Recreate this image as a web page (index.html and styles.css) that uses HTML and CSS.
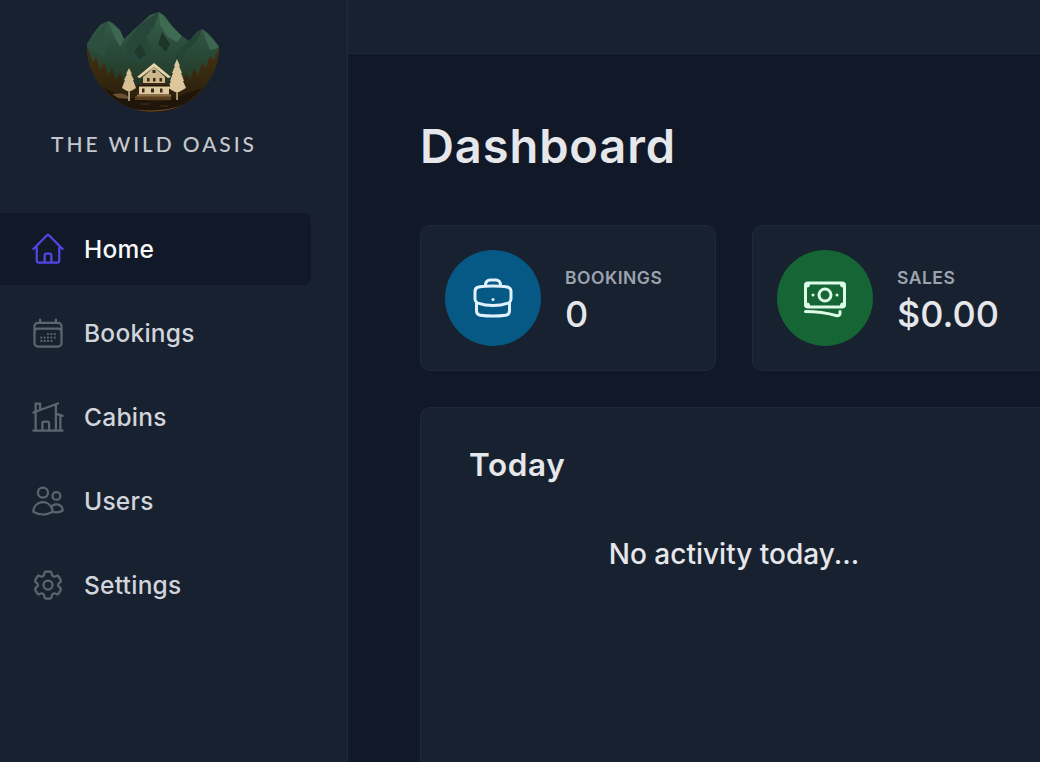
FILE: index.html
```html
<!DOCTYPE html>
<html lang="en">
<head>
  <meta charset="UTF-8">
  <title>The Wild Oasis</title>
  <link rel="stylesheet" href="styles.css">
</head>
<body>
  <div class="app">
    <aside class="sidebar">
      <div class="brand">
        <svg class="brand-logo" viewBox="87 11 132 102" aria-hidden="true">
          <defs>
            <linearGradient id="bowl" x1="0" y1="0" x2="0" y2="1">
              <stop offset="0" stop-color="#37604a"/>
              <stop offset="0.4" stop-color="#294a39"/>
              <stop offset="0.6" stop-color="#263f2c"/>
              <stop offset="1" stop-color="#2a1a0b"/>
            </linearGradient>
            <linearGradient id="forest" x1="0" y1="0" x2="0" y2="1">
              <stop offset="0" stop-color="#47310f"/>
              <stop offset="0.55" stop-color="#33260f"/>
              <stop offset="1" stop-color="#251809"/>
            </linearGradient>
            <clipPath id="shape">
              <path d="M87 44 L93 34 L100 25 L108 21 L113 23 L120 30 L124 39 L140 24 L150 15 L159 12 L165 16 L172 26 L182 36 L189 41 L197 32 L202 29 L208 33 L214 40 L219 46 A66 66 0 0 1 87 46 Z"/>
            </clipPath>
          </defs>
          <g clip-path="url(#shape)">
            <rect x="87" y="11" width="132" height="102" fill="url(#bowl)"/>
            <path d="M108 21 L103 33 L109 43 L103 56 L87 48 L87 42 Z" fill="#2c5040"/>
            <path d="M159 12 L154 27 L146 37 L150 49 L142 64 L128 60 L126 44 L140 24 Z" fill="#26473a"/>
            <path d="M159 12 L172 26 L182 36 L177 42 L168 37 L160 25 Z" fill="#3f6b52"/>
            <path d="M202 29 L196 42 L186 50 L182 64 L170 66 L178 52 L189 41 Z" fill="#244436"/>
            <path d="M202 29 L214 40 L219 48 L210 50 L206 40 Z" fill="#3d6750"/>
            <path d="M108 21 L120 30 L124 39 L120 47 L114 36 Z" fill="#3d6750"/>
            <path d="M162 32 L170 44 L166 52 L158 44 Z" fill="#1d3527"/>
            <path d="M140 44 L146 54 L140 60 L134 52 Z" fill="#1f3a2c"/>
            <path d="M87 46 L93 62 L96 56 L100 70 L104 62 L108 76 L112 68 L116 80 L120 72 L124 86 L140 86 L170 86 L182 84 L186 72 L190 80 L194 68 L198 76 L202 62 L206 68 L210 56 L214 60 L219 46 L219 113 L87 113 Z" fill="url(#forest)"/>
            <path d="M104 88 A62 62 0 0 0 202 88 L190 92 L175 98 L130 98 L115 93 Z" fill="#20150a"/>
            <path d="M112 94 Q127 92 129 99 L118 98 Z" fill="#6a5233"/>
            <path d="M135 96 H171 V100 H135 Z" fill="#5c3f20"/>
            <path d="M140 104 H150 M160 106 H168 M148 100 H165" stroke="#4a3318" stroke-width="1"/>
            <path d="M118 106 Q153 117 188 104" fill="none" stroke="#6b4a25" stroke-width="1.2"/>
          </g>
          <rect x="128.400" y="86" width="1.300" height="15" fill="#e7d3a8"/>
          <rect x="176.400" y="86" width="1.300" height="14" fill="#e7d3a8"/>
          <path d="M129 68 L132 74 L131 74 L134 80 L133 80 L136 88 L131 91 H127 L122 88 L125 80 L124 80 L127 74 L126 74 Z" fill="#d6bf92"/>
          <path d="M177 59 L180 66 L179 66 L182 73 L181 73 L184 81 L183 81 L186 88 L179 92 H175 L168 88 L171 81 L170 81 L173 73 L172 73 L175 66 L174 66 Z" fill="#dcc79b"/>
          <path d="M154 63 L137 77 L140 78 L154 67 L168 78 L171 77 Z" fill="#e5d3ab"/>
          <path d="M154 67 L143 77 V83 H165 V77 Z" fill="#cdb88e"/>
          <rect x="142" y="83" width="25" height="2.500" fill="#3a2612"/>
          <rect x="137" y="85" width="33" height="1.500" fill="#241608"/>
          <rect x="139" y="86.500" width="30" height="8" fill="#dcc9a0"/>
          <rect x="137" y="94.500" width="34" height="2" fill="#8a6d42"/>
          <path d="M152.500 70 h3 v3 h-3 Z M147 78 h2.500 v3.500 h-2.500 Z M153 78 h2.500 v3.500 h-2.500 Z M159.500 78 h2.500 v3.500 h-2.500 Z M142 88.500 h2.500 v4 h-2.500 Z M151 88.500 h3 v4 h-3 Z M160 88.500 h2.500 v4 h-2.500 Z" fill="#3a2612"/>
        </svg>
        <div class="brand-name">THE WILD OASIS</div>
      </div>
      <nav class="nav">
        <a class="nav-link active" href="#">
          <svg class="nav-icon" viewBox="0 0 24 24"><path d="m2.25 12 8.954-8.955c.44-.439 1.152-.439 1.591 0L21.75 12M4.5 9.75v10.125c0 .621.504 1.125 1.125 1.125H9.75v-4.875c0-.621.504-1.125 1.125-1.125h2.25c.621 0 1.125.504 1.125 1.125V21h4.125c.621 0 1.125-.504 1.125-1.125V9.75M8.250 21h8.250"/></svg>
          <span>Home</span>
        </a>
        <a class="nav-link" href="#">
          <svg class="nav-icon" viewBox="0 0 24 24"><path d="M6.750 3v2.250M17.250 3v2.250M3 18.750V7.500a2.250 2.250 0 0 1 2.250-2.250h13.500A2.250 2.250 0 0 1 21 7.500v11.250m-18 0A2.250 2.250 0 0 0 5.250 21h13.500A2.250 2.250 0 0 0 21 18.750m-18 0v-7.500A2.250 2.250 0 0 1 5.250 9h13.500A2.250 2.250 0 0 1 21 11.250v7.500m-9-6h.008v.008H12v-.008ZM12 15h.008v.008H12V15Zm0 2.250h.008v.008H12v-.008ZM9.750 15h.008v.008H9.750V15Zm0 2.250h.008v.008H9.750v-.008ZM7.500 15h.008v.008H7.500V15Zm0 2.250h.008v.008H7.500v-.008Zm6.750-4.500h.008v.008h-.008v-.008Zm0 2.250h.008v.008h-.008V15Zm0 2.250h.008v.008h-.008v-.008Zm2.250-4.500h.008v.008H16.500v-.008Zm0 2.250h.008v.008H16.500V15Z"/></svg>
          <span>Bookings</span>
        </a>
        <a class="nav-link" href="#">
          <svg class="nav-icon" viewBox="0 0 24 24"><path d="M8.250 21v-4.875c0-.621.504-1.125 1.125-1.125h2.250c.621 0 1.125.504 1.125 1.125V21m0 0h4.500V3.545M12.750 21h7.500V10.750M2.250 21h1.500m18 0h-18M2.250 9l4.500-1.636M18.750 3l-1.500.545m0 6.205 3 1m1.500.500-1.500-.500M6.750 7.364V3h-3v18m3-13.636 10.500-3.819"/></svg>
          <span>Cabins</span>
        </a>
        <a class="nav-link" href="#">
          <svg class="nav-icon" viewBox="0 0 24 24"><path d="M15 19.128a9.380 9.380 0 0 0 2.625.372 9.337 9.337 0 0 0 4.121-.952 4.125 4.125 0 0 0-7.533-2.493M15 19.128v-.003c0-1.113-.285-2.160-.786-3.070M15 19.128v.106A12.318 12.318 0 0 1 8.624 21c-2.331 0-4.512-.645-6.374-1.766l-.001-.109a6.375 6.375 0 0 1 11.964-3.070M12 6.375a3.375 3.375 0 1 1-6.750 0 3.375 3.375 0 0 1 6.750 0Zm8.250 2.250a2.625 2.625 0 1 1-5.250 0 2.625 2.625 0 0 1 5.250 0Z"/></svg>
          <span>Users</span>
        </a>
        <a class="nav-link" href="#">
          <svg class="nav-icon" viewBox="0 0 24 24"><path d="M9.594 3.940c.090-.542.560-.940 1.110-.940h2.593c.550 0 1.020.398 1.110.940l.213 1.281c.063.374.313.686.645.870.074.040.147.083.220.127.325.196.720.257 1.075.124l1.217-.456a1.125 1.125 0 0 1 1.370.490l1.296 2.247a1.125 1.125 0 0 1-.260 1.431l-1.003.827c-.293.241-.438.613-.430.992a7.723 7.723 0 0 1 0 .255c-.008.378.137.750.430.991l1.004.827c.424.350.534.955.260 1.430l-1.298 2.247a1.125 1.125 0 0 1-1.369.491l-1.217-.456c-.355-.133-.750-.072-1.076.124a6.470 6.470 0 0 1-.220.128c-.331.183-.581.495-.644.869l-.213 1.281c-.090.543-.560.940-1.110.940h-2.594c-.550 0-1.019-.398-1.110-.940l-.213-1.281c-.062-.374-.312-.686-.644-.870a6.520 6.520 0 0 1-.220-.127c-.325-.196-.720-.257-1.076-.124l-1.217.456a1.125 1.125 0 0 1-1.369-.490l-1.297-2.247a1.125 1.125 0 0 1 .260-1.431l1.004-.827c.292-.240.437-.613.430-.991a6.932 6.932 0 0 1 0-.255c.007-.380-.138-.751-.430-.992l-1.004-.827a1.125 1.125 0 0 1-.260-1.430l1.297-2.247a1.125 1.125 0 0 1 1.370-.491l1.216.456c.356.133.751.072 1.076-.124.072-.044.146-.086.220-.128.332-.183.582-.495.644-.869l.214-1.280Z"/><path d="M15 12a3 3 0 1 1-6 0 3 3 0 0 1 6 0Z"/></svg>
          <span>Settings</span>
        </a>
      </nav>
    </aside>

    <header class="topbar"></header>

    <main class="main">
      <h1 class="page-title">Dashboard</h1>
      <div class="stats">
        <div class="stat">
          <div class="stat-icon stat-icon-blue">
            <svg viewBox="0 0 24 24"><path d="M20.250 14.150v4.250c0 1.094-.787 2.036-1.872 2.180-2.087.277-4.216.420-6.378.420s-4.291-.143-6.378-.420c-1.085-.144-1.872-1.086-1.872-2.180v-4.250m16.500 0a2.180 2.180 0 0 0 .750-1.661V8.706c0-1.081-.768-2.015-1.837-2.175a48.114 48.114 0 0 0-3.413-.387m4.500 8.006c-.194.165-.420.295-.673.380A23.978 23.978 0 0 1 12 15.750c-2.648 0-5.195-.429-7.577-1.220a2.016 2.016 0 0 1-.673-.380m0 0A2.180 2.180 0 0 1 3 12.489V8.706c0-1.081.768-2.015 1.837-2.175a48.111 48.111 0 0 1 3.413-.387m7.500 0V5.250A2.250 2.250 0 0 0 13.500 3h-3a2.250 2.250 0 0 0-2.250 2.250v.894m7.500 0a48.667 48.667 0 0 0-7.500 0M12 12.750h.008v.008H12v-.008Z"/></svg>
          </div>
          <div class="stat-text">
            <h5 class="stat-label">Bookings</h5>
            <p class="stat-value">0</p>
          </div>
        </div>
        <div class="stat">
          <div class="stat-icon stat-icon-green">
            <svg viewBox="0 0 24 24"><path d="M2.250 18.750a60.070 60.070 0 0 1 15.797 2.101c.727.198 1.453-.342 1.453-1.096V18.750M3.750 4.500v.750A.750.750 0 0 1 3 6h-.750m0 0v-.375c0-.621.504-1.125 1.125-1.125H20.250M2.250 6v9m18-10.500v.750c0 .414.336.750.750.750h.750m-1.500-1.500h.375c.621 0 1.125.504 1.125 1.125v9.750c0 .621-.504 1.125-1.125 1.125h-.375m1.500-1.500H21a.750.750 0 0 0-.750.750v.750m0 0H3.750m0 0h-.375a1.125 1.125 0 0 1-1.125-1.125V15m1.500 1.500v-.750A.750.750 0 0 0 3 15h-.750M15 10.500a3 3 0 1 1-6 0 3 3 0 0 1 6 0Zm3 0h.008v.008H18V10.500Zm-12 0h.008v.008H6V10.500Z"/></svg>
          </div>
          <div class="stat-text">
            <h5 class="stat-label">Sales</h5>
            <p class="stat-value">$0.00</p>
          </div>
        </div>
        <div class="stat"></div>
        <div class="stat"></div>
      </div>
      <section class="today">
        <h2 class="today-title">Today</h2>
        <p class="today-empty">No activity today...</p>
      </section>
    </main>
  </div>
</body>
</html>
```

FILE: styles.css
```css
* {
  box-sizing: border-box;
  margin: 0;
  padding: 0;
}
body {
  font-family: Inter, "Noto Sans", sans-serif;
  line-height: 1.4;
  background: #111827;
  color: #e5e7eb;
  overflow: hidden;
}
.app {
  display: grid;
  grid-template-columns: 348px 1fr;
  grid-template-rows: 54px 1fr;
  height: 100vh;
  overflow: hidden;
}
.sidebar {
  grid-row: 1 / -1;
  background: #18212f;
  border-right: 1px solid #1f2937;
  padding: 11px 36px 0 0;
}
.brand {
  display: flex;
  flex-direction: column;
  align-items: center;
  padding-right: 5px;
}
.brand-logo {
  width: 132px;
  height: 102px;
  display: block;
}
.brand-name {
  font-family: Lato, sans-serif;
  font-size: 21px;
  font-weight: 500;
  letter-spacing: 2.9px;
  line-height: 30px;
  margin: 16px 0 0 2px;
  color: #c4c8ce;
}
.nav {
  display: flex;
  flex-direction: column;
  gap: 12px;
  margin-top: 54px;
}
.nav-link {
  display: flex;
  align-items: center;
  gap: 18px;
  height: 72px;
  padding-left: 30px;
  border-radius: 0 8px 8px 0;
  font-size: 24.5px;
  font-weight: 500;
  letter-spacing: 0.25px;
  color: #d1d5db;
  text-decoration: none;
}
.nav-link.active {
  background: #111827;
  color: #f9fafb;
}
.nav-icon {
  width: 36px;
  height: 36px;
  flex: none;
  fill: none;
  stroke: #5b6471;
  stroke-width: 1.5;
  stroke-linecap: round;
  stroke-linejoin: round;
}
.active .nav-icon {
  stroke: #4f46e5;
}
.topbar {
  background: #18212f;
  border-bottom: 1px solid #1f2937;
}
.main {
  padding: 60px 0 0 72px;
  display: flex;
  flex-direction: column;
  gap: 48px;
  overflow: hidden;
}
.page-title {
  font-size: 47px;
  font-weight: 600;
  letter-spacing: 0.9px;
  line-height: 63px;
  color: #e5e7eb;
}
.stats {
  display: grid;
  grid-template-columns: repeat(4, 296px);
  gap: 36px;
}
.stat {
  height: 146px;
  background: #18212f;
  border: 1px solid #1f2937;
  border-radius: 10px;
  padding: 24px;
  display: flex;
  align-items: center;
  gap: 24px;
}
.stat-icon {
  width: 96px;
  height: 96px;
  border-radius: 50%;
  flex: none;
  display: flex;
  align-items: center;
  justify-content: center;
}
.stat-icon svg {
  width: 48px;
  height: 48px;
  fill: none;
  stroke-width: 1.5;
  stroke-linecap: round;
  stroke-linejoin: round;
}
.stat-icon-blue {
  background: #075985;
}
.stat-icon-blue svg {
  stroke: #e0f2fe;
}
.stat-icon-green {
  background: #166534;
}
.stat-icon-green svg {
  stroke: #dcfce7;
}
.stat-label {
  font-size: 17.5px;
  font-weight: 600;
  letter-spacing: 0.5px;
  line-height: 32px;
  text-transform: uppercase;
  color: #9ca3af;
}
.stat-value {
  font-size: 36px;
  font-weight: 500;
  line-height: 40px;
  color: #e5e7eb;
}
.today {
  width: 628px;
  height: 500px;
  flex: none;
  margin-top: -12px;
  background: #18212f;
  border: 1px solid #1f2937;
  border-radius: 10px;
  padding: 36px 48px;
}
.today-title {
  font-size: 31.5px;
  font-weight: 600;
  letter-spacing: 0.6px;
  line-height: 42px;
  color: #e5e7eb;
}
.today-empty {
  margin-top: 49px;
  text-align: center;
  font-size: 28px;
  font-weight: 500;
  line-height: 38px;
  color: #e5e7eb;
}
```
